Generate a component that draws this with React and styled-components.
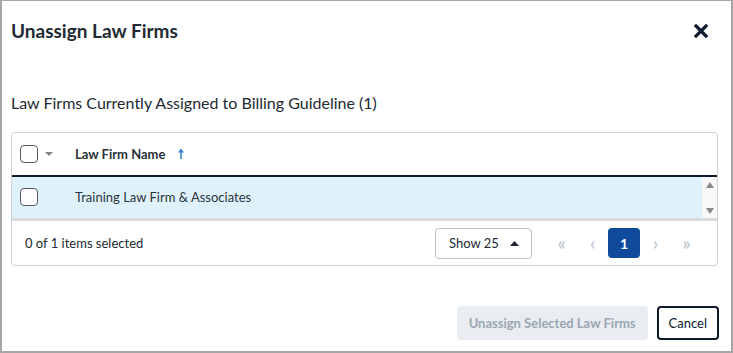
import React from 'react'
import styled, { createGlobalStyle } from 'styled-components'

const GlobalStyle = createGlobalStyle`
    body{
        margin: 0;
        font-family: Lato, "Liberation Sans", sans-serif;
        color: #222a33;
    }
`;

function Checkbox() {
    return <Box />
}

function App() {
    return (
        <>
            <GlobalStyle />
            <DialogStyled>
                <Header>
                    <h1>Unassign Law Firms</h1>
                    <CloseButton aria-label="Close">
                        <svg width="14" height="14" viewBox="0 0 14 14">
                            <path d="M2 2 L12 12 M12 2 L2 12" stroke="#0c1b2e" strokeWidth="3.2" strokeLinecap="square" />
                        </svg>
                    </CloseButton>
                </Header>
                <Body>
                    <h2>Law Firms Currently Assigned to Billing Guideline (1)</h2>
                    <Grid>
                        <HeadRow>
                            <SelectCell>
                                <Checkbox />
                                <Caret />
                            </SelectCell>
                            <HeadTitle>
                                Law Firm Name
                                <svg width="8" height="12" viewBox="0 0 8 12">
                                    <path d="M4 1 L4 11" stroke="#3b8ad6" strokeWidth="1.6" />
                                    <path d="M0.8 4.6 L4 0.8 L7.2 4.6 Z" fill="#3b8ad6" />
                                </svg>
                            </HeadTitle>
                        </HeadRow>
                        <Rows>
                            <DataRow>
                                <SelectCell><Checkbox /></SelectCell>
                                <span>Training Law Firm &amp; Associates</span>
                            </DataRow>
                            <ScrollBar>
                                <svg width="10" height="8" viewBox="0 0 10 8"><path d="M1 7 L5 1 L9 7 Z" fill="#8a8a8a" /></svg>
                                <svg width="10" height="8" viewBox="0 0 10 8"><path d="M1 1 L5 7 L9 1 Z" fill="#8a8a8a" /></svg>
                            </ScrollBar>
                        </Rows>
                        <Footer>
                            <span>0 of 1 items selected</span>
                            <Pager>
                                <PageSize>
                                    <span>Show 25</span>
                                    <svg width="9" height="5" viewBox="0 0 9 5"><path d="M0 5 L4.5 0 L9 5 Z" fill="#1b2430" /></svg>
                                </PageSize>
                                <Nav>
                                    <PageLink>«</PageLink>
                                    <PageLink>‹</PageLink>
                                    <PageLink $active>1</PageLink>
                                    <PageLink>›</PageLink>
                                    <PageLink>»</PageLink>
                                </Nav>
                            </Pager>
                        </Footer>
                    </Grid>
                </Body>
                <Actions>
                    <Button disabled>Unassign Selected Law Firms</Button>
                    <Button $outline>Cancel</Button>
                </Actions>
            </DialogStyled>
        </>
    )
}

const DialogStyled = styled.div`
    box-sizing: border-box;
    width: 733px;
    height: 353px;
    border: 2px solid #a6a6a6;
    border-top-width: 1px;
    background: #fff;
    display: flex;
    flex-direction: column;
`;

const Header = styled.div`
    display: flex;
    align-items: center;
    justify-content: space-between;
    padding: 18px 23px 0 9px;
    h1{
        margin: 0;
        font-size: 19px;
        font-weight: 700;
        color: #222a33;
        line-height: 24px;
    }
`;

const CloseButton = styled.button`
    border: none;
    background: none;
    padding: 0;
    display: flex;
    cursor: pointer;
`;

const Body = styled.div`
    padding: 0 13px 0 9px;
    h2{
        margin: 50px 0 19px;
        font-size: 16px;
        font-weight: 400;
        line-height: 20px;
        color: #222a33;
    }
`;

const Grid = styled.div`
    border: 1px solid #cfd3d6;
    border-radius: 4px;
    font-size: 13px;
`;

const HeadRow = styled.div`
    display: flex;
    align-items: center;
    height: 42px;
    border-bottom: 2px solid #0c1b2e;
`;

const SelectCell = styled.div`
    width: 63px;
    display: flex;
    align-items: center;
    gap: 7px;
    padding-left: 8px;
    box-sizing: border-box;
`;

const Box = styled.span`
    width: 18px;
    height: 18px;
    box-sizing: border-box;
    border: 1.5px solid #4e5a65;
    border-radius: 4px;
    background: #fff;
`;

const Caret = styled.span`
    width: 0;
    height: 0;
    border-left: 4px solid transparent;
    border-right: 4px solid transparent;
    border-top: 4px solid #7d858c;
`;

const HeadTitle = styled.div`
    display: flex;
    align-items: center;
    gap: 12px;
    font-weight: 700;
    color: #2a323b;
`;

const Rows = styled.div`
    display: flex;
    height: 41px;
    border-bottom: 3px solid #dcdcdc;
`;

const DataRow = styled.div`
    flex: 1;
    display: flex;
    align-items: center;
    padding-bottom: 2px;
    background: #dff2fb;
    color: #2a323b;
`;

const ScrollBar = styled.div`
    width: 15px;
    background: #f8f8f8;
    display: flex;
    flex-direction: column;
    justify-content: space-between;
    align-items: center;
    padding: 4px 0 3px;
    box-sizing: border-box;
`;

const Footer = styled.div`
    display: flex;
    align-items: center;
    justify-content: space-between;
    height: 44px;
    padding: 0 0 0 13px;
    color: #222a33;
`;

const Pager = styled.div`
    display: flex;
    align-items: center;
    gap: 14px;
`;

const PageSize = styled.div`
    box-sizing: border-box;
    width: 97px;
    height: 31px;
    border: 1px solid #b9c2cb;
    border-radius: 4px;
    display: flex;
    align-items: center;
    justify-content: space-between;
    padding: 0 12px 0 13px;
    font-size: 13px;
`;

const Nav = styled.div`
    display: flex;
    align-items: center;
    gap: 0;
    padding-right: 15px;
`;

const PageLink = styled.span`
    width: ${p => p.$active ? '32px' : '31px'};
    height: 30px;
    display: flex;
    align-items: center;
    justify-content: center;
    border-radius: 4px;
    font-size: ${p => p.$active ? '14px' : '18px'};
    font-weight: 700;
    background: ${p => p.$active ? '#0f4a9c' : 'transparent'};
    color: ${p => p.$active ? '#fff' : '#c6cbd0'};
`;

const Actions = styled.div`
    margin-top: auto;
    display: flex;
    justify-content: flex-end;
    gap: 9px;
    padding: 0 12px 11px 0;
`;

const Button = styled.button`
    height: 34px;
    box-sizing: border-box;
    padding: 0 10px;
    border-radius: 4px;
    font-family: Lato, "Liberation Sans", sans-serif;
    font-size: 13px;
    border: ${p => p.$outline ? '2px solid #0c1b2e' : '2px solid #e9edf1'};
    background: ${p => p.$outline ? '#fff' : '#e9edf1'};
    color: ${p => p.$outline ? '#0c1b2e' : '#9aa6b2'};
    font-weight: ${p => p.$outline ? 400 : 700};
`;

export default App
